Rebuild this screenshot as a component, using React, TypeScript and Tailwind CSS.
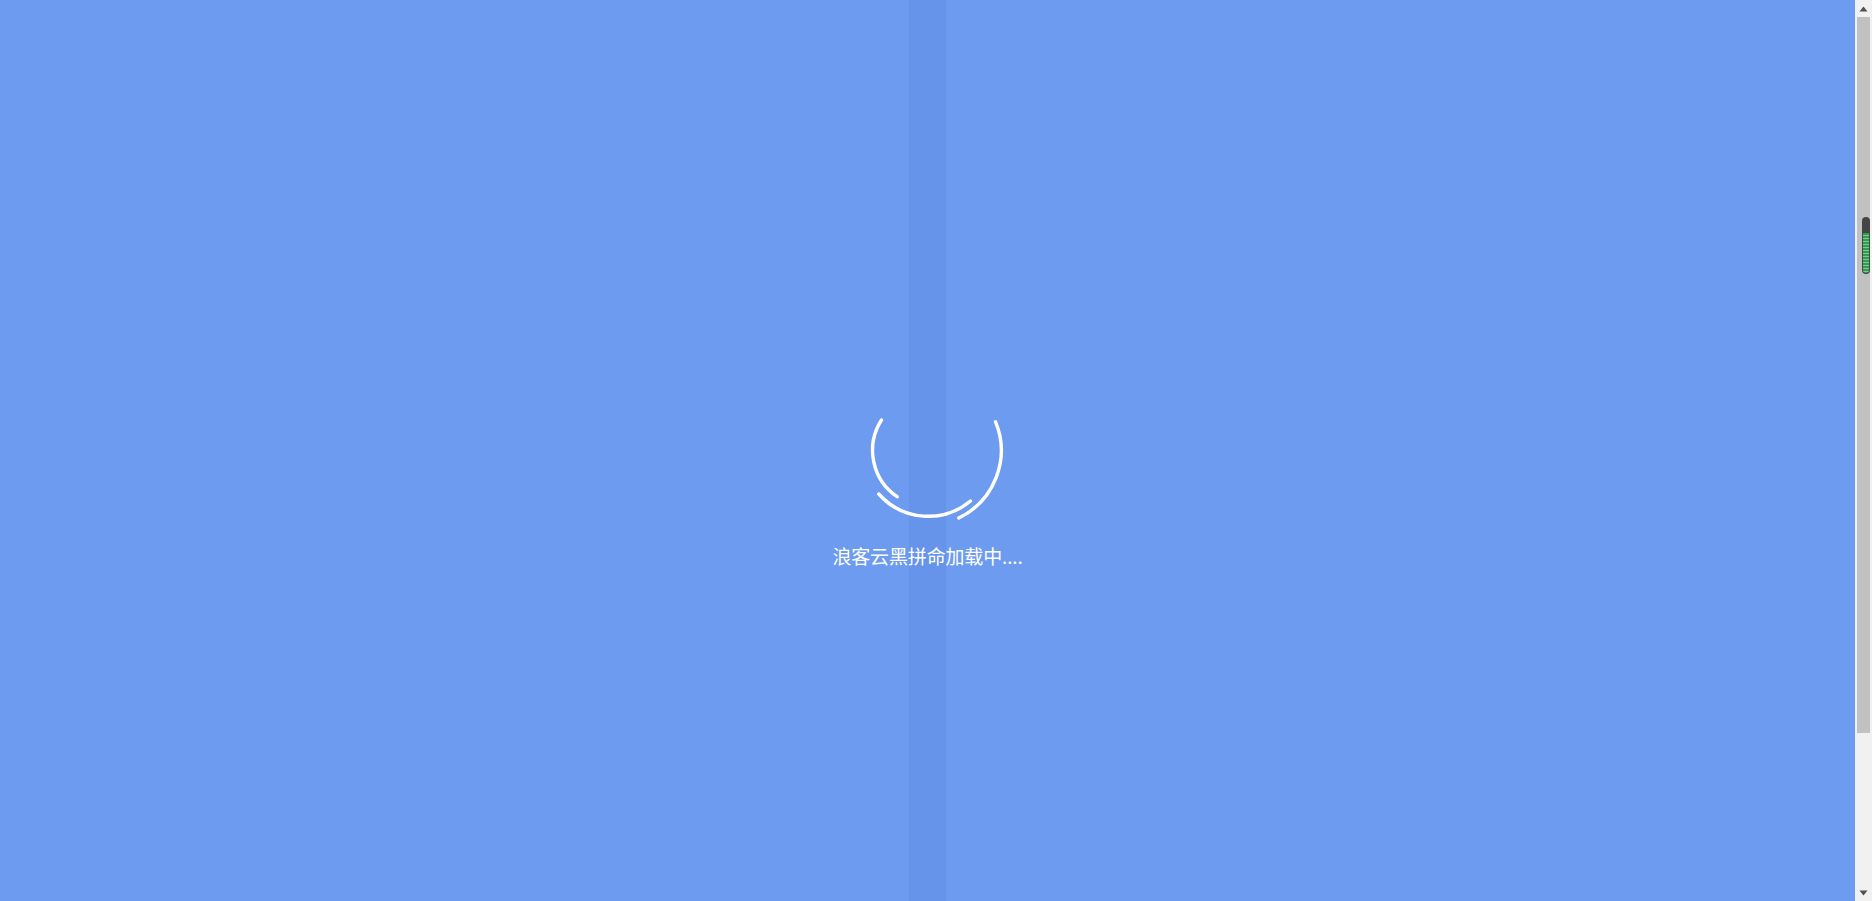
export default function App() {
  return (
    <div className="flex h-[901px] w-full overflow-hidden">
      <main className="relative flex flex-1 flex-col items-center bg-[#6d9bef] pt-[400px]">
        {/* darker strip behind the spinner */}
        <div className="absolute inset-y-0 left-[909px] w-[37px] bg-[#6694ea]" />
        <svg className="relative" width="160" height="130" viewBox="0 0 160 130" fill="none" stroke="#fff" strokeWidth="3.4" strokeLinecap="round">
          <path d="M33.5 20A56 56 0 0 0 49.2 96.7" />
          <path d="M30.8 94A66 66 0 0 0 122.5 101" />
          <path d="M147.5 21.7A75 75 0 0 1 110.8 118" />
        </svg>
        <p className="relative mt-[12px] text-[19px] leading-[28px] tracking-[-0.15px] text-white font-['Noto_Sans_CJK_SC',sans-serif]">
          浪客云黑拼命加载中....
        </p>
      </main>
      <aside className="flex w-[17px] shrink-0 flex-col bg-[#f1f1f1]">
        <div className="flex h-[17px] items-center justify-center">
          <svg width="9" height="6" viewBox="0 0 9 6"><polygon points="4.5,0.5 8.5,5.5 0.5,5.5" fill="#505050" /></svg>
        </div>
        <div className="mx-[2px] h-[716px] bg-[#c1c1c1] pt-[200px]">
          <div className="ml-[5px] flex h-[57px] w-[8px] flex-col overflow-hidden rounded-full bg-[#444] px-[1px] pb-[1px] pt-[16px]">
            <div className="flex-1 rounded-b-full bg-[repeating-linear-gradient(#2f9e4c_0,#2f9e4c_2px,#7fc896_2px,#7fc896_3px)]" />
          </div>
        </div>
        <div className="flex-1" />
        <div className="flex h-[17px] items-center justify-center">
          <svg width="9" height="6" viewBox="0 0 9 6"><polygon points="0.5,0.5 8.5,0.5 4.5,5.5" fill="#505050" /></svg>
        </div>
      </aside>
    </div>
  )
}
